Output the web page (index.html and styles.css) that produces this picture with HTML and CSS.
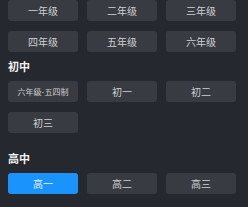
FILE: index.html
```html
<!DOCTYPE html>
<html lang="zh-CN">
<head>
    <meta charset="UTF-8">
    <meta name="viewport" content="width=device-width, initial-scale=1.0">
    <title>选择年级</title>
    <link rel="stylesheet" href="styles.css">
</head>
<body>
    <div class="section section-tight">
        <div class="grade-grid">
            <div class="grade-item">一年级</div>
            <div class="grade-item">二年级</div>
            <div class="grade-item">三年级</div>
            <div class="grade-item">四年级</div>
            <div class="grade-item">五年级</div>
            <div class="grade-item">六年级</div>
        </div>
    </div>

    <div class="section">
        <h3 class="section-title">初中</h3>
        <div class="grade-grid">
            <div class="grade-item small">六年级-五四制</div>
            <div class="grade-item">初一</div>
            <div class="grade-item">初二</div>
            <div class="grade-item">初三</div>
        </div>
    </div>

    <div class="section">
        <h3 class="section-title">高中</h3>
        <div class="grade-grid">
            <div class="grade-item active">高一</div>
            <div class="grade-item">高二</div>
            <div class="grade-item">高三</div>
        </div>
    </div>
</body>
</html>
```

FILE: styles.css
```css
body {
    margin: 0;
    padding: 0 8px;
    background-color: #25282e;
    font-family: "Noto Sans CJK SC", "Noto Sans", sans-serif;
}
.section {
    margin-bottom: 17px;
}
.section-tight {
    margin-bottom: 6px;
}
.section-title {
    margin: 0 0 7px;
    font-size: 11px;
    line-height: 16px;
    font-weight: bold;
    color: #f2f2f2;
}
.grade-grid {
    display: grid;
    grid-template-columns: repeat(3, 70px);
    column-gap: 9px;
    row-gap: 10px;
}
.grade-item {
    height: 21px;
    line-height: 21px;
    text-align: center;
    background-color: #383b42;
    border-radius: 3px;
    color: #cfd0d2;
    font-size: 10px;
    cursor: pointer;
}
.grade-item.small {
    font-size: 8px;
}
.grade-item.active {
    background-color: #1b93fc;
    color: #e4f1ff;
}
```
